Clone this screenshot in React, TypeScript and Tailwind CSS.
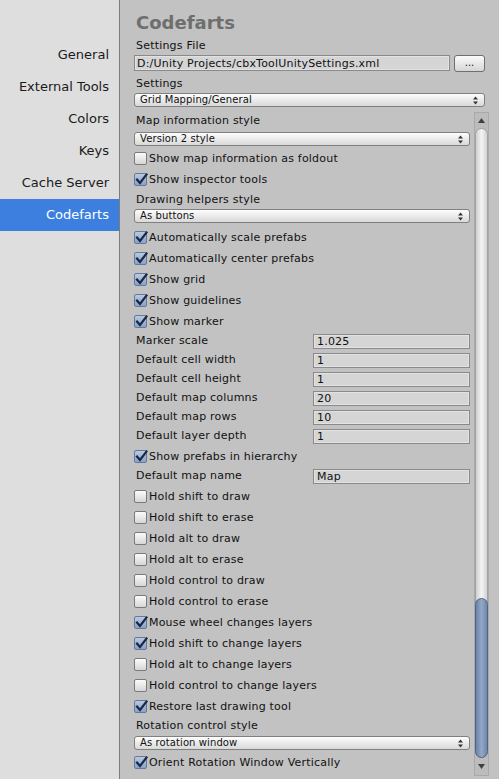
import React from "react";

const font = { fontFamily: '"DejaVu Sans", Verdana, sans-serif' };

function Check({ checked }: { checked: boolean }) {
  if (!checked) {
    return (
      <div className="w-[13px] h-[13px] shrink-0 rounded-[2px] border border-[#7a7a7a] bg-gradient-to-b from-[#fbfbfb] to-[#d6d6d6]" />
    );
  }
  return (
    <div className="relative w-[13px] h-[13px] shrink-0 rounded-[2px] border border-[#66799a] bg-gradient-to-b from-[#b9c9e0] to-[#8aa2c6]">
      <svg className="absolute left-[-1px] top-[-2px]" width="15" height="15" viewBox="0 0 15 15">
        <path d="M3 7.5 L6 11 L12.5 2.5" fill="none" stroke="#17294a" strokeWidth="2.2" strokeLinecap="square" />
      </svg>
    </div>
  );
}

function CheckRow({ text, checked, cls = "" }: { text: string; checked: boolean; cls?: string }) {
  return (
    <div className={"h-[21px] flex items-center gap-[2px] " + cls}>
      <Check checked={checked} />
      <span className="text-[11px] tracking-[0.2px] text-[#111] leading-none whitespace-nowrap">{text}</span>
    </div>
  );
}

function Label({ text, cls = "" }: { text: string; cls?: string }) {
  return (
    <div className={"h-[16px] flex items-center pl-[2px] text-[11px] tracking-[0.2px] text-[#111] whitespace-nowrap " + cls}>
      {text}
    </div>
  );
}

function Arrows() {
  return (
    <svg width="5" height="9" viewBox="0 0 5 9">
      <polygon points="0,3.5 2.5,0.5 5,3.5" fill="#333" />
      <polygon points="0,5.5 5,5.5 2.5,8.5" fill="#333" />
    </svg>
  );
}

function Drop({ text, cls = "" }: { text: string; cls?: string }) {
  return (
    <div
      className={
        "h-[14px] flex items-center justify-between pl-[5px] pr-[6px] rounded-[3px] border border-[#808080] bg-gradient-to-b from-[#fdfdfd] to-[#d9d9d9] " +
        cls
      }
    >
      <span className="text-[10px] tracking-[0.1px] text-[#111] leading-none whitespace-nowrap">{text}</span>
      <Arrows />
    </div>
  );
}

function Field({ label, value }: { label: string; value: string }) {
  return (
    <div className="h-[19px] flex items-center">
      <div className="w-[179px] pl-[2px] text-[11px] tracking-[0.2px] text-[#111] whitespace-nowrap">{label}</div>
      <div className="w-[157px] h-[15px] flex items-center pl-[3px] border border-[#8a8a8a] bg-[#d5d5d5] shadow-[inset_0_0_0_1px_#e2e2e2] text-[11px] tracking-[0.2px] text-[#111] leading-none">
        {value}
      </div>
    </div>
  );
}

const sidebarItems = ["General", "External Tools", "Colors", "Keys", "Cache Server", "Codefarts"];

export default function App() {
  return (
    <div className="flex w-[499px] h-[779px] overflow-hidden" style={font}>
      <div className="w-[120px] shrink-0 bg-[#dedede] border-r border-[#7c7c7c] pt-[39px]">
        {sidebarItems.map((s) => (
          <div
            key={s}
            className={
              "h-[32px] flex items-center justify-end pr-[10px] text-[13px] whitespace-nowrap " +
              (s === "Codefarts" ? "bg-[#3d7fdf] text-white" : "text-[#1a1a1a]")
            }
          >
            {s}
          </div>
        ))}
      </div>
      <div className="flex-1 bg-[#c2c2c2] flex flex-col pl-[14px] pr-[10px]">
        <div className="mr-[4px]">
          <div className="pt-[12px] h-[34px] pl-[2px] text-[18px] leading-[22px] font-bold text-[#6e6e6e]">Codefarts</div>
          <Label text="Settings File" cls="mt-[4px]" />
          <div className="mt-[1px] flex items-start">
            <div className="flex-1 h-[16px] flex items-center pl-[2px] border border-[#8a8a8a] bg-[#d5d5d5] shadow-[inset_0_0_0_1px_#e2e2e2] text-[11px] tracking-[0.2px] text-[#111] leading-none whitespace-nowrap">
              D:/Unity Projects/cbxToolUnitySettings.xml
            </div>
            <div className="ml-[4px] w-[31px] h-[17px] rounded-[3px] border border-[#6f6f6f] bg-gradient-to-b from-[#fbfbfb] to-[#d6d6d6] flex items-center justify-center text-[10px] text-[#111] leading-none pb-[2px]">
              ...
            </div>
          </div>
          <Label text="Settings" cls="mt-[4px]" />
          <Drop text="Grid Mapping/General" cls="mt-[1px]" />
        </div>
        <div className="mt-[5px] h-[664px] flex">
          <div className="flex-1 flex flex-col pt-[1px] pr-[4px]">
            <Label text="Map information style" />
            <Drop text="Version 2 style" cls="mt-[3px]" />
            <CheckRow text="Show map information as foldout" checked={false} cls="mt-[2px]" />
            <CheckRow text="Show inspector tools" checked={true} />
            <Label text="Drawing helpers style" cls="mt-[2px]" />
            <Drop text="As buttons" cls="mt-[1px]" />
            <CheckRow text="Automatically scale prefabs" checked={true} cls="mt-[4px]" />
            <CheckRow text="Automatically center prefabs" checked={true} />
            <CheckRow text="Show grid" checked={true} />
            <CheckRow text="Show guidelines" checked={true} />
            <CheckRow text="Show marker" checked={true} />
            <Field label="Marker scale" value="1.025" />
            <Field label="Default cell width" value="1" />
            <Field label="Default cell height" value="1" />
            <Field label="Default map columns" value="20" />
            <Field label="Default map rows" value="10" />
            <Field label="Default layer depth" value="1" />
            <CheckRow text="Show prefabs in hierarchy" checked={true} />
            <Field label="Default map name" value="Map" />
            <CheckRow text="Hold shift to draw" checked={false} />
            <CheckRow text="Hold shift to erase" checked={false} />
            <CheckRow text="Hold alt to draw" checked={false} />
            <CheckRow text="Hold alt to erase" checked={false} />
            <CheckRow text="Hold control to draw" checked={false} />
            <CheckRow text="Hold control to erase" checked={false} />
            <CheckRow text="Mouse wheel changes layers" checked={true} />
            <CheckRow text="Hold shift to change layers" checked={true} />
            <CheckRow text="Hold alt to change layers" checked={false} />
            <CheckRow text="Hold control to change layers" checked={false} />
            <CheckRow text="Restore last drawing tool" checked={true} />
            <Label text="Rotation control style" cls="mt-[1px]" />
            <Drop text="As rotation window" cls="mt-[2px]" />
            <CheckRow text="Orient Rotation Window Vertically" checked={true} cls="mt-[2px]" />
          </div>
          <div className="w-[15px] shrink-0 flex flex-col bg-[#bcbcbc] border border-[#a9a9a9]">
            <div className="h-[15px] flex items-center justify-center">
              <svg width="7" height="5" viewBox="0 0 7 5">
                <polygon points="0,5 3.5,0 7,5" fill="#404040" />
              </svg>
            </div>
            <div className="flex-1 flex flex-col rounded-[7px] border border-[#a2a2a2] bg-gradient-to-r from-[#cfcfcf] via-[#f4f4f4] to-[#d2d2d2]">
              <div className="flex-1" />
              <div className="h-[160px] -mx-[1px] -mb-[1px] rounded-[7px] border border-[#4d6387] bg-gradient-to-r from-[#6b83a8] via-[#93a8c7] to-[#6f87ab]" />
            </div>
            <div className="h-[17px] flex items-center justify-center">
              <svg width="7" height="5" viewBox="0 0 7 5">
                <polygon points="0,0 7,0 3.5,5" fill="#404040" />
              </svg>
            </div>
          </div>
        </div>
      </div>
    </div>
  );
}
